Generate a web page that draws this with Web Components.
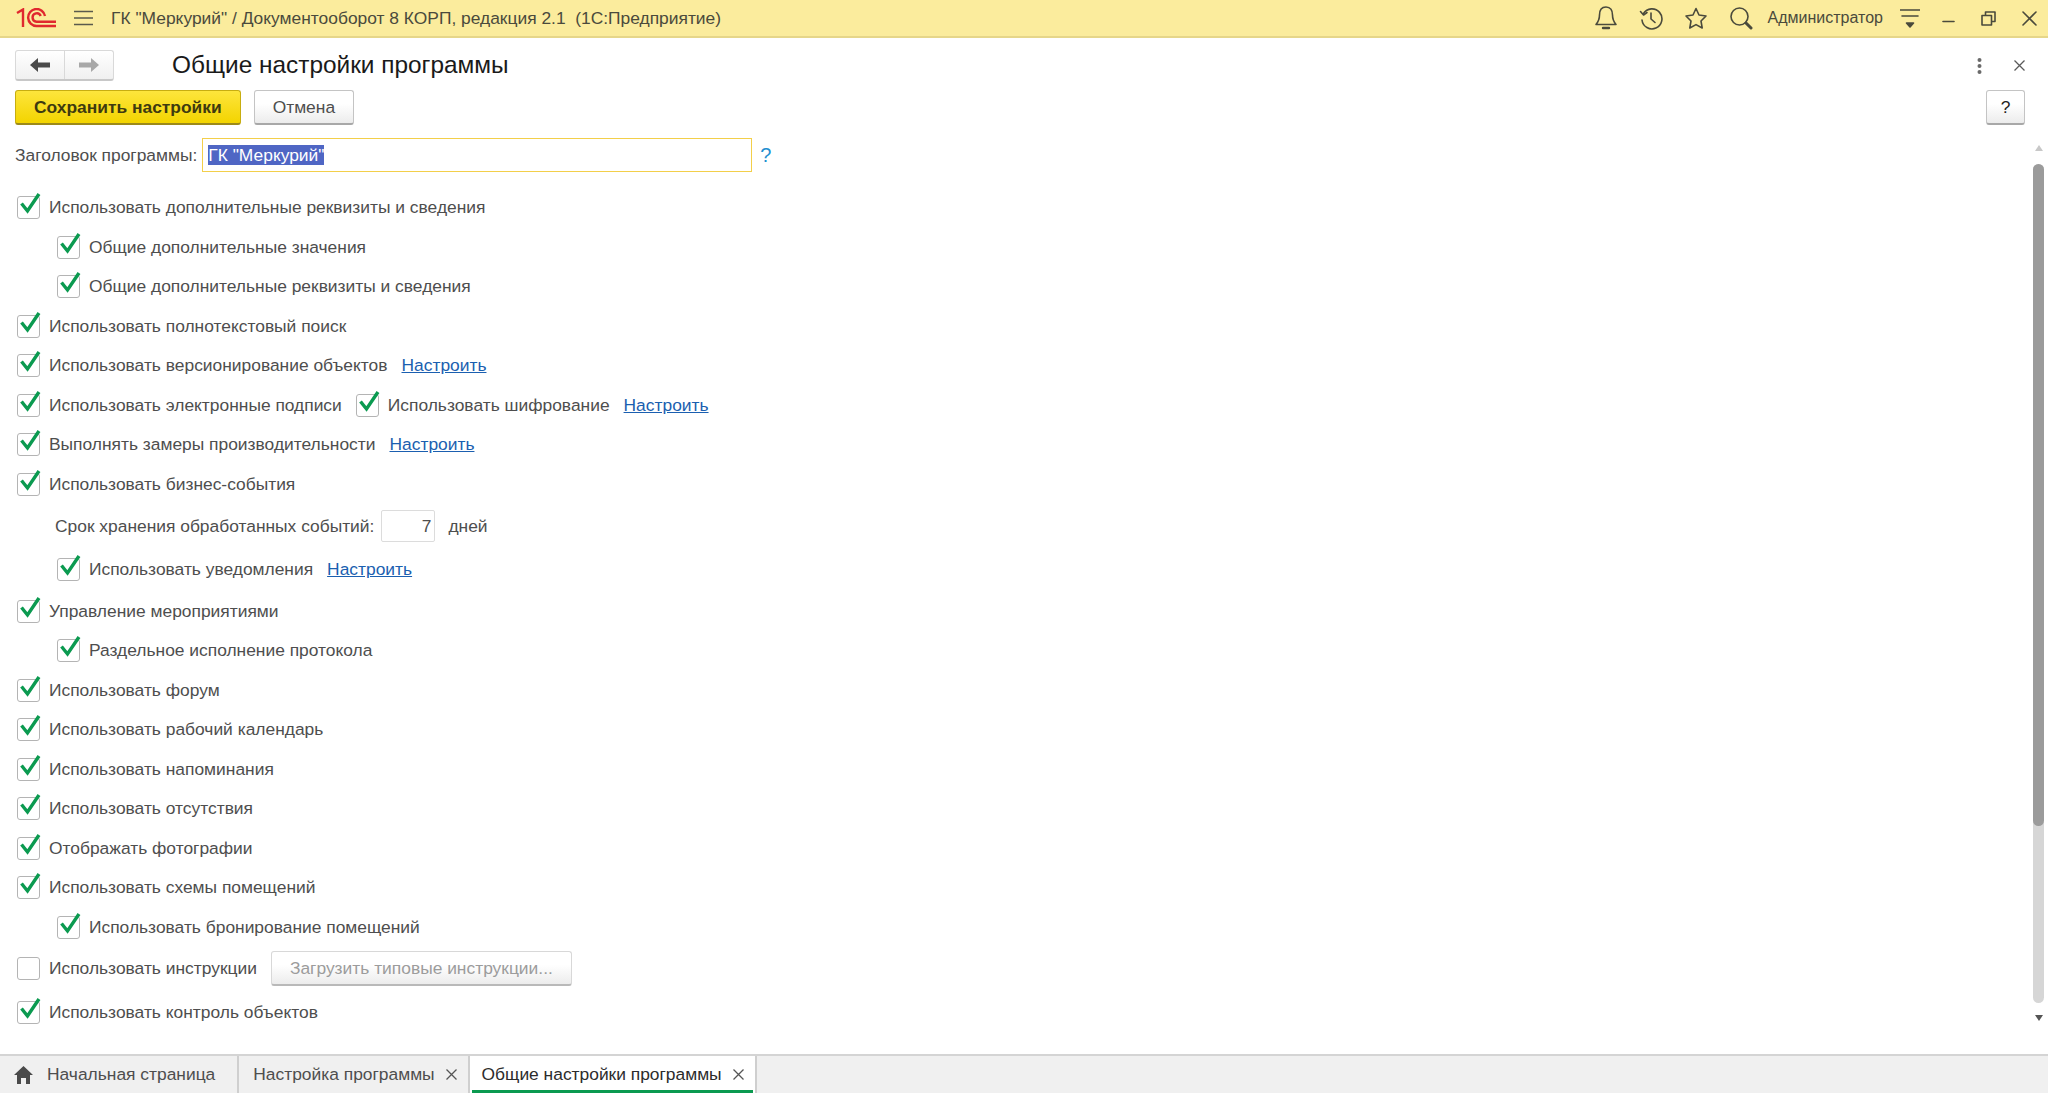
<!DOCTYPE html>
<html lang="ru">
<head>
<meta charset="utf-8">
<title>Общие настройки программы</title>
<style>
  html, body { margin:0; height:100%; background:#fff; overflow:hidden; }
  body { font:17.4px/1.2 "Liberation Sans", Arial, sans-serif; color:#4e4e4e; }
</style>
</head>
<body>
<app-shell>
  <app-titlebar slot="top" caption='ГК "Меркурий" / Документооборот 8 КОРП, редакция 2.1  (1С:Предприятие)' user="Администратор"></app-titlebar>
  <form-header caption="Общие настройки программы"></form-header>
  <form-body>
    <field-row></field-row>
    <form-row><form-check checked>Использовать дополнительные реквизиты и сведения</form-check></form-row>
    <form-row indent><form-check checked>Общие дополнительные значения</form-check></form-row>
    <form-row indent><form-check checked>Общие дополнительные реквизиты и сведения</form-check></form-row>
    <form-row><form-check checked>Использовать полнотекстовый поиск</form-check></form-row>
    <form-row><form-check checked>Использовать версионирование объектов</form-check><form-link>Настроить</form-link></form-row>
    <form-row><form-check checked>Использовать электронные подписи</form-check><form-check checked>Использовать шифрование</form-check><form-link>Настроить</form-link></form-row>
    <form-row><form-check checked>Выполнять замеры производительности</form-check><form-link>Настроить</form-link></form-row>
    <form-row><form-check checked>Использовать бизнес-события</form-check></form-row>
    <number-row label="Срок хранения обработанных событий:" value="7" unit="дней"></number-row>
    <form-row indent tall><form-check checked>Использовать уведомления</form-check><form-link>Настроить</form-link></form-row>
    <form-row><form-check checked>Управление мероприятиями</form-check></form-row>
    <form-row indent><form-check checked>Раздельное исполнение протокола</form-check></form-row>
    <form-row><form-check checked>Использовать форум</form-check></form-row>
    <form-row><form-check checked>Использовать рабочий календарь</form-check></form-row>
    <form-row><form-check checked>Использовать напоминания</form-check></form-row>
    <form-row><form-check checked>Использовать отсутствия</form-check></form-row>
    <form-row><form-check checked>Отображать фотографии</form-check></form-row>
    <form-row><form-check checked>Использовать схемы помещений</form-check></form-row>
    <form-row indent><form-check checked>Использовать бронирование помещений</form-check></form-row>
    <form-row tall><form-check>Использовать инструкции</form-check><ui-button disabled>Загрузить типовые инструкции...</ui-button></form-row>
    <form-row tall><form-check checked>Использовать контроль объектов</form-check></form-row>
  </form-body>
  <tab-strip>
    <tab-item home>Начальная страница</tab-item>
    <tab-item closable>Настройка программы</tab-item>
    <tab-item closable active>Общие настройки программы</tab-item>
  </tab-strip>
</app-shell>

<script>
  const ink = "#4e4e4e";

  class AppShell extends HTMLElement {
    constructor() {
      super();
      this.attachShadow({ mode: "open" }).innerHTML = `
        <style>
          :host { display:flex; flex-direction:column; height:100vh; overflow:hidden; }
        </style>
        <slot name="top"></slot><slot></slot>`;
    }
  }

  class AppTitlebar extends HTMLElement {
    connectedCallback() {
      const stroke = `fill="none" stroke="#4a4a3c" stroke-width="1.6" stroke-linecap="round" stroke-linejoin="round"`;
      this.attachShadow({ mode: "open" }).innerHTML = `
        <style>
          :host {
            display:flex; align-items:center; height:36px; flex:none; box-sizing:content-box;
            background:#fbec9d; border-bottom:2px solid #e6d68a; color:#4a4a3c;
          }
          svg { display:block; flex:none; }
          .logo { margin-left:16px; }
          .menu { margin-left:18px; }
          .caption { margin-left:18px; font-size:17.4px; white-space:pre; flex:1; }
          .user { font-size:16px; margin:0 17px 0 15px; }
          .tools { display:flex; align-items:center; gap:21px; }
          .win { display:flex; align-items:center; gap:26px; margin:0 11px 0 22px; }
        </style>
        <svg class="logo" width="40" height="20" viewBox="0 0 40 20" fill="none" stroke="#e0282e" stroke-width="2.4">
          <path d="M1 5 L7 1.5 V19"/><path d="M40 18 H20.5 A8.5 8.5 0 1 1 29 8"/><path d="M40 13.7 H20.5 A4.2 4.2 0 1 1 24.7 8"/>
        </svg>
        <svg class="menu" width="19" height="16" viewBox="0 0 19 16" stroke="#5a5a4c" stroke-width="1.6"><path d="M0 1.5H19M0 8H19M0 14.5H19"/></svg>
        <span class="caption">${this.getAttribute("caption")}</span>
        <div class="tools">
          <svg width="24" height="26" viewBox="0 0 24 26" ${stroke}><path d="M12 2c-4.5 0-6.5 3.500-6.500 8 0 4-1 6.500-3.500 9.500h20c-2.500-3-3.500-5.500-3.500-9.500 0-4.500-2-8-6.500-8z"/><path d="M9 23h6" stroke-width="2.400"/></svg>
          <svg width="24" height="24" viewBox="0 0 24 24" ${stroke}><path d="M4.500 7.500A10 10 0 1 1 3 14"/><path d="M1.500 5.500l3 3.500 3.500-2.500" /><path d="M12 7v6l4 3.500"/></svg>
          <svg width="24" height="24" viewBox="0 0 24 24" ${stroke}><path d="M12 2.500l3 6.500 7 1-5 5 1.200 7-6.200-3.400L5.800 22 7 15 2 10l7-1z"/></svg>
          <svg width="24" height="24" viewBox="0 0 24 24" ${stroke}><circle cx="10.500" cy="10.500" r="8.500"/><path d="M17 17l5 5" stroke-width="3"/></svg>
        </div>
        <span class="user">${this.getAttribute("user")}</span>
        <svg width="20" height="22" viewBox="0 0 20 22" ${stroke}><path d="M0 3H20M2 9H18"/><path d="M6.500 16h7L10 20z" fill="#4a4a3c"/></svg>
        <div class="win">
          <svg width="13" height="10" viewBox="0 0 13 10" ${stroke}><path d="M1 8.500H12"/></svg>
          <svg width="15" height="15" viewBox="0 0 15 15" ${stroke}><path d="M1 4.500h9.500V14H1zM4.500 4.500V1H14v9.500h-3.500"/></svg>
          <svg width="15" height="15" viewBox="0 0 15 15" ${stroke}><path d="M1 1l13 13M14 1L1 14"/></svg>
        </div>`;
    }
  }

  class UiButton extends HTMLElement {
    constructor() {
      super();
      this.attachShadow({ mode: "open" }).innerHTML = `
        <style>
          :host {
            display:inline-flex; align-items:center; justify-content:center; box-sizing:border-box;
            height:35px; padding:0 18px; border:1px solid #c4c4c4; border-bottom:2px solid #a8a8a8; border-radius:3px;
            background:linear-gradient(#fff 40%,#ececec); color:#4e4e4e; white-space:nowrap; flex:none;
          }
          :host([primary]) {
            background:linear-gradient(#fde53c,#f3d400); border-color:#c7ad10; border-bottom-color:#9c8a1a;
            color:#3e3a10; font-weight:700; padding:0 18px;
          }
          :host([disabled]) { color:#9c9c9c; border-color:#d8d8d8; border-bottom-color:#b9b9b9; }
          :host([icon]) { padding:0; width:39px; color:#222; }
        </style><slot></slot>`;
    }
  }

  class FormHeader extends HTMLElement {
    connectedCallback() {
      this.attachShadow({ mode: "open" }).innerHTML = `
        <style>
          :host { display:block; flex:none; padding:12px 23px 0 15px; }
          .top { display:flex; align-items:center; height:31px; }
          .nav {
            display:flex; width:99px; height:31px; box-sizing:border-box; border:1px solid #d9d9d9;
            border-bottom:2px solid #c8c8c8; border-radius:3px; background:linear-gradient(#fff,#f0f0f0);
          }
          .nav span { flex:1; display:flex; align-items:center; justify-content:center; }
          .nav span + span { border-left:1px solid #d9d9d9; }
          h1 { margin:0 0 0 58px; font:400 24.400px/1 "Liberation Sans", Arial, sans-serif; color:#1a1a1a; flex:1; }
          .kebab { margin-right:32px; }
          .acts { display:flex; align-items:center; gap:13px; margin-top:9px; }
          .help { margin-left:auto; }
        </style>
        <div class="top">
          <div class="nav">
            <span><svg width="20" height="16" viewBox="0 0 20 16" fill="#4a4a4a"><path d="M0 8L8 1v4.500h12v5H8V15z"/></svg></span>
            <span><svg width="20" height="16" viewBox="0 0 20 16" fill="#a8a8a8"><path d="M20 8L12 1v4.500H0v5h12V15z"/></svg></span>
          </div>
          <h1>${this.getAttribute("caption")}</h1>
          <svg class="kebab" width="5" height="16" viewBox="0 0 5 16" fill="#6a6a6a"><circle cx="2.500" cy="2" r="2"/><circle cx="2.500" cy="8" r="2"/><circle cx="2.500" cy="14" r="2"/></svg>
          <svg width="11" height="11" viewBox="0 0 11 11" stroke="#5a5a5a" stroke-width="1.300"><path d="M.5.500l10 10M10.500.500l-10 10"/></svg>
        </div>
        <div class="acts">
          <ui-button primary>Сохранить настройки</ui-button>
          <ui-button>Отмена</ui-button>
          <ui-button class="help" icon>?</ui-button>
        </div>`;
    }
  }

  class FormBody extends HTMLElement {
    constructor() {
      super();
      this.attachShadow({ mode: "open" }).innerHTML = `
        <style>
          :host { display:flex; flex:1; min-height:0; padding-top:13px; }
          .rows { flex:1; display:flex; flex-direction:column; min-width:0; }
          .bar { flex:none; width:11px; margin:7px 4px 0 0; display:flex; flex-direction:column; align-items:center; }
          .up, .down { width:0; height:0; border:4px solid transparent; }
          .up { border-top:0; border-bottom:6px solid #c8c8c8; margin-bottom:13px; }
          .down { border-bottom:0; border-top:6px solid #555; margin-top:12px; }
          .track { width:11px; height:839px; border-radius:6px; background:#d6d6d6; }
          .thumb { height:662px; border-radius:6px; background:#9b9b9b; }
        </style>
        <div class="rows"><slot></slot></div>
        <div class="bar"><div class="up"></div><div class="track"><div class="thumb"></div></div><div class="down"></div></div>`;
    }
  }

  class FieldRow extends HTMLElement {
    constructor() {
      super();
      this.attachShadow({ mode: "open" }).innerHTML = `
        <style>
          :host { display:flex; align-items:center; height:34px; padding-left:15px; margin-bottom:16px; flex:none; }
          .box {
            width:550px; height:34px; box-sizing:border-box; margin-left:5px; padding-left:5px;
            border:1.500px solid #f3cf4a; display:flex; align-items:center;
          }
          mark { background:#4f66c4; color:#fff; line-height:20px; }
          .q { margin-left:8px; color:#1f8fd0; font-size:20px; }
        </style>
        <label>Заголовок программы:</label>
        <div class="box"><mark>ГК "Меркурий"</mark></div>
        <span class="q">?</span>`;
    }
  }

  class FormRow extends HTMLElement {
    constructor() {
      super();
      this.attachShadow({ mode: "open" }).innerHTML = `
        <style>
          :host { display:flex; align-items:center; gap:14px; height:39.500px; padding-left:17px; flex:none; }
          :host([indent]) { padding-left:57px; }
          :host([tall]) { height:43.500px; }
        </style><slot></slot>`;
    }
  }

  class NumberRow extends HTMLElement {
    connectedCallback() {
      this.attachShadow({ mode: "open" }).innerHTML = `
        <style>
          :host { display:flex; align-items:center; height:44px; padding-left:55px; flex:none; }
          .num {
            width:54px; height:32px; box-sizing:border-box; margin:0 13px 0 7px; padding-right:3px;
            border:1px solid #dcdcdc; border-radius:2px; display:flex; align-items:center; justify-content:flex-end;
          }
        </style>
        <span>${this.getAttribute("label")}</span>
        <span class="num">${this.getAttribute("value")}</span>
        <span>${this.getAttribute("unit")}</span>`;
    }
  }

  class FormCheck extends HTMLElement {
    constructor() {
      super();
      this.attachShadow({ mode: "open" }).innerHTML = `
        <style>
          :host { display:inline-flex; align-items:center; gap:9px; white-space:nowrap; flex:none; }
          .box {
            position:relative; width:23px; height:23px; box-sizing:border-box; flex:none;
            border:1.500px solid #b4b4b4; border-radius:3px; background:#fff;
          }
          svg { position:absolute; left:1px; top:-5px; display:none; }
          :host([checked]) svg { display:block; }
        </style>
        <span class="box"><svg width="23" height="23" viewBox="0 0 23 23" fill="none" stroke="#0b9a50" stroke-width="3.400"><path d="M2.500 11.500l6 7.500L20 2"/></svg></span>
        <span><slot></slot></span>`;
    }
  }

  class FormLink extends HTMLElement {
    constructor() {
      super();
      this.attachShadow({ mode: "open" }).innerHTML = `
        <style>:host { color:#1b5fb0; text-decoration:underline; flex:none; }</style><slot></slot>`;
    }
  }

  class TabStrip extends HTMLElement {
    constructor() {
      super();
      this.attachShadow({ mode: "open" }).innerHTML = `
        <style>
          :host { display:flex; flex:none; height:39px; box-sizing:border-box; background:#f0f0f0; border-top:2px solid #d4d4d4; }
        </style><slot></slot>`;
    }
  }

  class TabItem extends HTMLElement {
    connectedCallback() {
      const root = this.attachShadow({ mode: "open" });
      const home = this.hasAttribute("home")
        ? `<svg width="19" height="18" viewBox="0 0 19 18" fill="#4a4a4a"><path d="M9.500 0L19 9h-3v9h-4v-6H7v6H3V9H0z"/></svg>` : "";
      const close = this.hasAttribute("closable")
        ? `<svg class="x" width="11" height="11" viewBox="0 0 11 11" stroke="#555" stroke-width="1.300"><path d="M.5.500l10 10M10.500.500l-10 10"/></svg>` : "";
      root.innerHTML = `
        <style>
          :host {
            display:flex; align-items:center; box-sizing:border-box; padding:0 11px 0 14px; gap:11px;
            border-right:2px solid #cfcfcf; white-space:nowrap; position:relative; color:#4e4e4e;
          }
          :host([home]) { padding:0 22px 0 14px; gap:14px; }
          :host([active]) { background:#fff; color:#2c2c2c; padding-left:12px; }
          :host([active])::after { content:""; position:absolute; left:2px; right:2px; bottom:0; height:3px; background:#0b9a50; }
        </style>
        ${home}<span><slot></slot></span>${close}`;
    }
  }

  customElements.define("app-shell", AppShell);
  customElements.define("app-titlebar", AppTitlebar);
  customElements.define("ui-button", UiButton);
  customElements.define("form-header", FormHeader);
  customElements.define("form-body", FormBody);
  customElements.define("field-row", FieldRow);
  customElements.define("form-row", FormRow);
  customElements.define("number-row", NumberRow);
  customElements.define("form-check", FormCheck);
  customElements.define("form-link", FormLink);
  customElements.define("tab-strip", TabStrip);
  customElements.define("tab-item", TabItem);
</script>
</body>
</html>
